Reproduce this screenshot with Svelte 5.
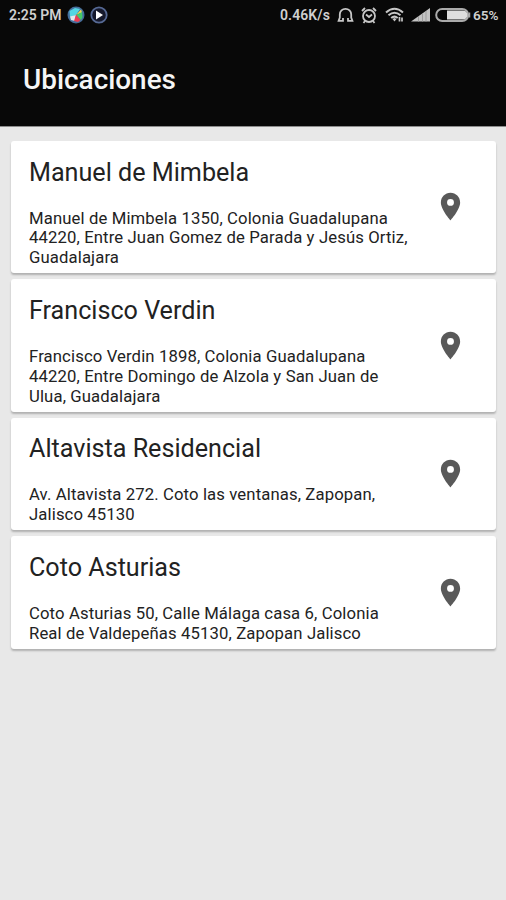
<script lang="ts">
    const places = [
        { name: "Manuel de Mimbela", address: "Manuel de Mimbela 1350, Colonia Guadalupana\n44220, Entre Juan Gomez de Parada y Jesús Ortiz,\nGuadalajara" },
        { name: "Francisco Verdin", address: "Francisco Verdin 1898, Colonia Guadalupana\n44220, Entre Domingo de Alzola y San Juan de\nUlua, Guadalajara" },
        { name: "Altavista Residencial", address: "Av. Altavista 272. Coto las ventanas, Zapopan,\nJalisco 45130" },
        { name: "Coto Asturias", address: "Coto Asturias 50, Calle Málaga casa 6, Colonia\nReal de Valdepeñas 45130, Zapopan Jalisco" }
    ]
</script>

<div class="screen">
    <header>
        <div class="status">
            <span class="time">2:25 PM</span>
            <svg class="gallery" width="18" height="18" viewBox="0 0 18 18">
                <circle cx="9" cy="9" r="8.5" fill="#456f9c" />
                <path d="M2.5 5 8 2l5 1-4 6-6 2z" fill="#53d6e3" />
                <path d="M3 10.5 9 9l-1 6-4-1z" fill="#e3e9ed" />
                <path d="m9 9 5-5.5 1 3z" fill="#f0d550" />
                <path d="m9 9 6-3 .5 5-1.5 3z" fill="#45c968" />
                <path d="m9 8.5 4.5 5.5-2.5 2-4-1z" fill="#ed3e54" />
            </svg>
            <svg class="play" width="18" height="18" viewBox="0 0 18 18">
                <circle cx="9" cy="9" r="7.7" fill="#15182b" stroke="#566994" stroke-width="1.8" />
                <path d="M6 4.5 13 9l-7 4.5z" fill="#fff" />
            </svg>

            <span class="speed">0.46K/s</span>
            <svg class="headset" width="17" height="16" viewBox="0 0 17 16" fill="none" stroke="#c6c6c6" stroke-width="1.8">
                <path d="M6 11v2.800H1.600L2.800 10.500V7.500a5.700 5.700 0 0 1 11.400 0v3l1.200 3.300H11V11" />
            </svg>
            <svg class="alarm" width="16" height="17" viewBox="0 0 16 17" fill="none" stroke="#c6c6c6" stroke-width="1.8">
                <circle cx="8" cy="9" r="6" />
                <path d="m1 4 3-3m11 3-3-3M5 7.5l3 2.500 3-2.500M4 14l-1.500 2M12 14l1.500 2" />
            </svg>
            <svg class="wifi" width="20" height="16" viewBox="0 0 20 16" fill="none" stroke="#c6c6c6" stroke-width="2">
                <path d="M1 5.5q8.500-7.500 17 0M3.500 8.300q6-5 12 0M6.200 11q3.300-2.800 6.500 0" />
                <path d="m7.500 12 2-1 2 1-2 2.500z" fill="#c6c6c6" stroke="none" />
                <path d="M14.500 10v4.500M17 14.500v-4" stroke-width="1.7" />
            </svg>
            <svg class="signal" width="19" height="14" viewBox="0 0 19 14">
                <path d="M0 13.500 19 0v13.500z" fill="#c2c2c2" />
                <path d="M7.500 8v6M11.500 5v9M15 3v11" stroke="#8c8c8c" stroke-width=".7" />
            </svg>
            <svg class="battery" width="36" height="16" viewBox="0 0 36 16">
                <rect x="1.2" y="2" width="32" height="12" rx="6" fill="#080808" stroke="#aaa" stroke-width="2" />
                <path d="M12 3.500h16a4.500 4.500 0 0 1 0 9H12z" fill="#dedede" />
                <path d="M34.500 5.500v5" stroke="#aaa" stroke-width="1.5" />
            </svg>
            <span class="percent">65%</span>
        </div>
        <h1>Ubicaciones</h1>
    </header>

    <main>
        {#each places as place}
            <div class="card">
                <div class="info">
                    <h2>{place.name}</h2>
                    <p>{place.address}</p>
                </div>
                <svg class="pin" width="33" height="33" viewBox="0 0 24 24">
                    <path d="M12 2C8.130 2 5 5.130 5 9c0 5.250 7 13 7 13s7-7.750 7-13c0-3.870-3.130-7-7-7zm0 9.500a2.500 2.500 0 1 1 0-5 2.500 2.500 0 0 1 0 5z" />
                </svg>
            </div>
        {/each}
    </main>
</div>

<style>
    :global(body) {
        margin: 0;
        background: #e8e8e8;
    }

    .screen {
        width: 506px;
        height: 900px;
        overflow: hidden;
        background: #e8e8e8;
        font-family: Roboto, "Liberation Sans", sans-serif;
    }

    header {
        height: 126px;
        background: #080808;
        border-bottom: 1px solid #8c8c8c;
        color: #f5f5f5;
    }

    .status {
        display: flex;
        align-items: center;
        height: 30px;
        padding: 0 8px 0 9px;
        color: #d0d0d0;
        font-size: 14px;
        font-weight: 600;
        white-space: nowrap;
    }

    .status svg {
        flex: none;
    }

    .time {
        width: 58px;
    }

    .play {
        margin-left: 5px;
    }

    .speed {
        width: 51px;
        margin-left: auto;
        letter-spacing: 0.1px;
    }

    .headset {
        margin-left: 6px;
    }

    .alarm {
        margin-left: 7px;
    }

    .wifi {
        margin-left: 8px;
    }

    .signal {
        margin-left: 6px;
    }

    .battery {
        margin-left: 5px;
    }

    .percent {
        width: 25px;
        margin-left: 2px;
        font-size: 13.5px;
    }

    h1 {
        margin: 33px 0 0 23px;
        font-size: 27.9px;
        font-weight: 500;
        line-height: 34px;
    }

    main {
        display: flex;
        flex-direction: column;
        gap: 6px;
        padding: 14px 10px 0 11px;
    }

    .card {
        display: flex;
        align-items: center;
        justify-content: space-between;
        padding: 15.5px 29px 5.4px 18px;
        border-radius: 3px;
        background: #fff;
        box-shadow: 0 2px 2px rgba(0, 0, 0, 0.24);
    }

    h2 {
        margin: 0;
        color: #222;
        font-size: 25.15px;
        font-weight: 400;
        line-height: 32px;
    }

    p {
        margin: 20.2px 0 0;
        color: #222;
        font-size: 16.7px;
        line-height: 19.75px;
        letter-spacing: 0.12px;
        white-space: pre;
    }

    .pin {
        flex: none;
        margin-bottom: 10.5px;
        fill: #595959;
    }
</style>
